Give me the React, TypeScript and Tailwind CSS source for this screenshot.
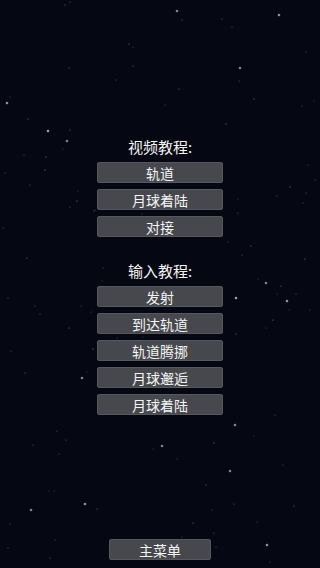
const stars: [number, number, number][] = [
  [65, 5, 0.5], [70, 2, 0.4], [129, 44, 0.5], [133, 47, 0.4], [69, 68, 0.5], [133, 66, 0.5],
  [116, 80, 0.4], [7, 103, 0.8], [10, 97, 0.4], [28, 119, 0.5], [48, 131, 0.9], [70, 130, 0.5],
  [177, 11, 0.7], [182, 20, 0.5], [222, 19, 0.4], [232, 27, 0.4], [279, 15, 0.8], [306, 52, 0.4],
  [240, 68, 0.7], [239, 81, 0.4], [179, 89, 0.5], [254, 99, 0.5], [165, 105, 0.4], [302, 106, 0.4],
  [314, 101, 0.3], [226, 124, 0.6], [67, 141, 0.7], [63, 149, 0.3], [24, 155, 0.4], [46, 157, 0.6],
  [45, 170, 0.6], [5, 173, 0.4], [30, 185, 0.4], [78, 191, 0.3], [77, 201, 0.6], [70, 207, 0.4],
  [94, 211, 0.4], [3, 228, 0.4], [27, 258, 0.5], [8, 298, 0.4], [35, 306, 0.4], [40, 314, 0.4],
  [81, 306, 0.3], [69, 328, 0.5], [11, 351, 0.4], [93, 349, 0.6], [25, 373, 0.5], [87, 372, 0.3],
  [82, 378, 0.7], [308, 165, 0.4], [315, 180, 0.4], [290, 187, 0.6], [277, 196, 0.4], [306, 193, 0.4],
  [303, 203, 0.4], [238, 199, 0.3], [238, 213, 0.4], [228, 242, 0.4], [251, 246, 0.5], [242, 255, 0.4],
  [305, 259, 0.6], [258, 279, 0.3], [266, 283, 0.7], [281, 286, 0.5], [277, 294, 0.3], [296, 294, 0.4],
  [287, 301, 0.8], [236, 298, 0.9], [289, 310, 0.3], [310, 310, 0.3], [273, 320, 0.6], [266, 328, 0.3],
  [236, 334, 0.5], [275, 415, 0.4], [161, 156, 0.4], [173, 182, 0.3], [95, 210, 0.4], [149, 208, 0.3],
  [142, 214, 0.3], [216, 234, 0.3], [103, 268, 0.4], [102, 281, 0.3], [91, 312, 0.3], [104, 317, 0.4],
  [117, 338, 0.3], [143, 337, 0.3], [205, 342, 0.4], [105, 383, 0.4], [120, 403, 0.3], [162, 352, 0.4],
  [57, 431, 0.4], [66, 440, 0.4], [33, 445, 0.4], [59, 454, 0.4], [162, 446, 0.7], [153, 449, 0.3],
  [177, 459, 0.3], [235, 425, 0.7], [214, 443, 0.6], [254, 436, 0.3], [230, 471, 0.7], [206, 485, 0.5],
  [212, 510, 0.3], [234, 504, 0.4], [283, 465, 0.4], [294, 506, 0.5], [49, 491, 0.3], [54, 491, 0.3],
  [31, 510, 0.7], [85, 504, 0.8], [97, 509, 0.5], [10, 524, 0.4], [193, 523, 0.5], [214, 533, 0.4],
  [257, 522, 0.3], [55, 540, 0.4], [8, 548, 0.4], [50, 558, 0.4], [267, 545, 0.8], [216, 547, 0.4],
  [182, 537, 0.3], [270, 562, 0.4],
];

const videoItems = ["轨道", "月球着陆", "对接"];
const inputItems = ["发射", "到达轨道", "轨道腾挪", "月球邂逅", "月球着陆"];

function MenuButton({ label, wide }: { label: string; wide?: boolean }) {
  return (
    <button
      className={
        (wide ? "w-[102px]" : "w-[126px]") +
        " h-[21px] shrink-0 flex items-center justify-center bg-[#46484e] border border-[#56585e] rounded-[2px] text-[14px] leading-none text-[#f4f4f4]"
      }
    >
      {label}
    </button>
  );
}

export default function App() {
  return (
    <div
      className="relative w-[320px] h-[568px] overflow-hidden bg-[#050812]"
      style={{ fontFamily: '"Noto Sans CJK SC", "Noto Sans", sans-serif' }}
    >
      <svg className="absolute inset-0" width="320" height="568" viewBox="0 0 320 568">
        {stars.map(([x, y, b], i) => (
          <g key={i}>
            {b > 0.6 && <circle cx={x} cy={y} r={1.6} fill="#ffffff" opacity={b * 0.25} />}
            <circle cx={x} cy={y} r={b > 0.6 ? 0.9 : 0.6} fill="#d8dce8" opacity={b} />
          </g>
        ))}
      </svg>

      <div className="relative flex flex-col items-center h-full pt-[137px] pb-[8px]">
        <div className="h-[20px] flex items-center text-[15px] text-[#f4f4f4]">视频教程:</div>
        <div className="flex flex-col items-center gap-[6px] mt-[5px]">
          {videoItems.map((t) => (
            <MenuButton key={t} label={t} />
          ))}
        </div>

        <div className="h-[20px] flex items-center text-[15px] text-[#f4f4f4] mt-[24px]">输入教程:</div>
        <div className="flex flex-col items-center gap-[6px] mt-[5px]">
          {inputItems.map((t, i) => (
            <MenuButton key={i} label={t} />
          ))}
        </div>

        <div className="mt-auto">
          <MenuButton label="主菜单" wide />
        </div>
      </div>
    </div>
  );
}
